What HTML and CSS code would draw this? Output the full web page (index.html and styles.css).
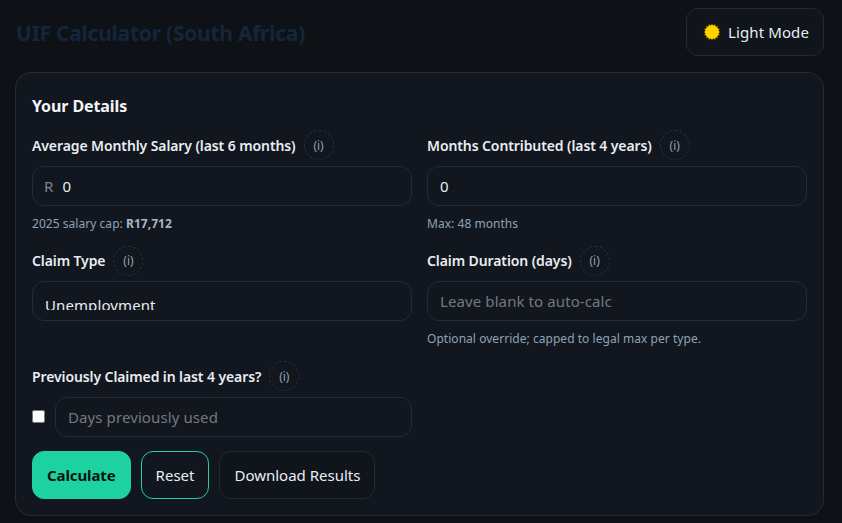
FILE: index.html
```html
<!DOCTYPE html>
<html lang="en">
<head>
    <meta charset="UTF-8">
    <meta name="viewport" content="width=device-width, initial-scale=1.0">
    <title>UIF Calculator (South Africa)</title>
    <link rel="stylesheet" href="styles.css">
</head>
<body>
    <div class="page">
        <header class="top-bar">
            <h1>UIF Calculator (South Africa)</h1>
            <button class="btn theme-btn" type="button">
                <svg class="sun" viewBox="0 0 16 16" width="18" height="18" aria-hidden="true">
                    <polygon points="8,0 9.2,2.1 11.1,.5 11.5,3 13.7,2.3 13.1,4.6 15.5,4.9 14,6.8 16,8 14,9.2 15.5,11.1 13.1,11.4 13.7,13.7 11.5,13 11.1,15.5 9.2,13.9 8,16 6.8,13.9 4.9,15.5 4.5,13 2.3,13.7 2.9,11.4 .5,11.1 2,9.2 0,8 2,6.8 .5,4.9 2.9,4.6 2.3,2.3 4.5,3 4.9,.5 6.8,2.1" fill="#ffd500" stroke="#1a1200" stroke-width=".7"/>
                </svg>
                Light Mode
            </button>
        </header>

        <section class="card">
            <h2>Your Details</h2>
            <div class="form-grid">
                <div class="field">
                    <label class="field-label">Average Monthly Salary (last 6 months) <span class="info">(i)</span></label>
                    <div class="input-box">
                        <span class="prefix">R</span>
                        <input class="bare-input" type="text" value="0">
                    </div>
                    <p class="hint">2025 salary cap: <strong>R17,712</strong></p>
                </div>
                <div class="field">
                    <label class="field-label">Months Contributed (last 4 years) <span class="info">(i)</span></label>
                    <input class="text-input" type="text" value="0">
                    <p class="hint">Max: 48 months</p>
                </div>
                <div class="field">
                    <label class="field-label">Claim Type <span class="info">(i)</span></label>
                    <select class="text-input select-input">
                        <option>Unemployment</option>
                        <option>Illness</option>
                        <option>Maternity</option>
                    </select>
                </div>
                <div class="field">
                    <label class="field-label">Claim Duration (days) <span class="info">(i)</span></label>
                    <input class="text-input" type="text" placeholder="Leave blank to auto-calc">
                    <p class="hint">Optional override; capped to legal max per type.</p>
                </div>
                <div class="field">
                    <label class="field-label">Previously Claimed in last 4 years? <span class="info">(i)</span></label>
                    <div class="check-row">
                        <input class="check" type="checkbox">
                        <input class="text-input" type="text" placeholder="Days previously used">
                    </div>
                </div>
            </div>
            <div class="actions">
                <button class="btn btn-primary" type="button">Calculate</button>
                <button class="btn btn-reset" type="button">Reset</button>
                <button class="btn" type="button">Download Results</button>
            </div>
        </section>
    </div>
</body>
</html>
```

FILE: styles.css
```css
* {
    box-sizing: border-box;
}
body {
    margin: 0;
    background-color: #0e1116;
    color: #e8edf2;
    font-family: "Noto Sans", "Open Sans", Arial, sans-serif;
    font-size: 15px;
}
.page {
    padding: 8px 18px 8px 15px;
}
.top-bar {
    display: flex;
    align-items: center;
    justify-content: space-between;
    height: 48px;
    margin-bottom: 16px;
}
h1 {
    margin: 1px 0 0 1px;
    color: #14263b;
    font-size: 21px;
    font-weight: 700;
    letter-spacing: -0.25px;
}
.btn {
    height: 48px;
    padding: 0 14px;
    border: 1px solid #252a32;
    border-radius: 12px;
    background-color: #10141b;
    color: #e8edf2;
    font-family: inherit;
    font-size: 15px;
}
.theme-btn {
    display: flex;
    align-items: center;
    gap: 8px;
    padding: 0 14px 0 17px;
    letter-spacing: 0.1px;
}
.sun {
    margin: 0 -1px;
}
.card {
    padding: 21px 16px 16px;
    border: 1px solid #262b33;
    border-radius: 16px;
    background-color: #12161e;
}
h2 {
    margin: 0 0 12px;
    font-size: 16px;
    font-weight: 700;
    line-height: 24px;
    color: #f2f5f8;
    letter-spacing: -0.1px;
}
.form-grid {
    display: grid;
    grid-template-columns: 1fr 1fr;
    column-gap: 15px;
}
.field {
    margin-bottom: 13px;
}
.field-label {
    display: flex;
    align-items: center;
    gap: 8px;
    height: 30.5px;
    margin-bottom: 5px;
    font-size: 14px;
    font-weight: 600;
    color: #e8edf2;
    letter-spacing: -0.1px;
}
.info {
    display: inline-flex;
    align-items: center;
    justify-content: center;
    width: 30px;
    height: 30px;
    border: 1px dashed #2b313a;
    border-radius: 50%;
    color: #8ea3b5;
    font-size: 12px;
    font-weight: 400;
    letter-spacing: 0;
}
.text-input,
.input-box {
    display: block;
    width: 100%;
    height: 40px;
    border: 1px solid #262b33;
    border-radius: 12px;
    background-color: #12161e;
    color: #e8edf2;
    font-family: inherit;
    font-size: 15px;
    letter-spacing: 0.1px;
}
.text-input {
    padding: 0 12px;
    outline: none;
}
.text-input::placeholder {
    color: #74797f;
}
.select-input {
    appearance: none;
    padding: 13px 12px 10px;
}
.input-box {
    display: flex;
    align-items: center;
    gap: 9px;
    padding: 0 12px 0 11px;
}
.prefix {
    color: #7b858f;
    font-size: 15px;
}
.bare-input {
    flex: 1;
    min-width: 0;
    padding: 0;
    border: 0;
    outline: none;
    background: transparent;
    color: #e8edf2;
    font-family: inherit;
    font-size: 15px;
}
.hint {
    margin: 9px 0 0;
    font-size: 12px;
    line-height: 18px;
    color: #8ea3b5;
    letter-spacing: 0.04px;
}
.hint strong {
    color: #a9b6c2;
}
.check-row {
    display: flex;
    align-items: center;
    gap: 10px;
}
.check {
    flex: none;
    width: 13px;
    height: 13px;
    margin: 0;
}
.actions {
    display: flex;
    gap: 10px;
    margin-top: 1px;
}
.btn-primary {
    border-color: #1dd1a1;
    background-color: #1dd1a1;
    color: #07130f;
    font-weight: 700;
    letter-spacing: -0.1px;
}
.btn-reset {
    border-color: #1dd1a1;
    background-color: transparent;
}
```
